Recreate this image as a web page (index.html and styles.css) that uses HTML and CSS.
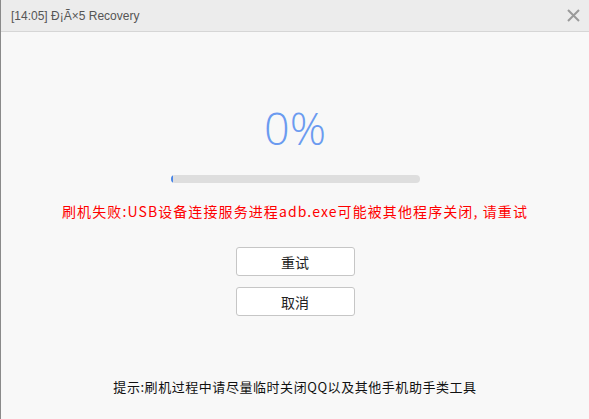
FILE: index.html
```html
<!DOCTYPE html>
<html>
<head>
<meta charset="utf-8">
<link rel="stylesheet" href="styles.css">
</head>
<body>
<div class="window">
  <div class="titlebar">
    <span class="title">[14:05] Ð¡Ã×5 Recovery</span>
    <svg class="close" width="13" height="13" viewBox="0 0 13 13"><path d="M1 1L12 12M12 1L1 12" stroke="#9a9a9a" stroke-width="2" fill="none"/></svg>
  </div>
  <div class="content">
    <div class="percent">0%</div>
    <div class="bar"><div class="fill" style="width:1%"></div></div>
    <div class="error">刷机失败:USB设备连接服务进程adb.exe可能被其他程序关闭, 请重试</div>
    <div class="buttons">
      <button class="btn">重试</button>
      <button class="btn">取消</button>
    </div>
    <div class="hint">提示:刷机过程中请尽量临时关闭QQ以及其他手机助手类工具</div>
  </div>
</div>
</body>
</html>
```
FILE: styles.css
```css
html, body { margin: 0; padding: 0; }
body {
  width: 589px; height: 419px; overflow: hidden;
  background: #f8f8f8;
  font-family: "Noto Sans", "Noto Sans CJK SC", sans-serif;
}
.window {
  height: 419px;
  box-sizing: border-box;
  border-left: 1px solid #8a8a8a;
  display: flex; flex-direction: column;
}
.titlebar {
  height: 32px; box-sizing: border-box;
  background: #ececec;
  border-bottom: 1px solid #d6d6d6;
  display: flex; align-items: center; justify-content: space-between;
  padding: 0 9px 0 10px;
}
.title { font-family: "Liberation Sans", Arial, sans-serif; font-size: 12px; color: #555; }
.close { display: block; }
.content {
  flex: 1;
  display: flex; flex-direction: column; align-items: center;
}
.percent {
  margin-top: 68px;
  font-family: "Open Sans", "Noto Sans", sans-serif;
  font-weight: 300;
  font-size: 45px; line-height: 56px;
  color: #6b9bf0;
}
.bar {
  margin-top: 19px;
  width: 249px; height: 8px;
  border-radius: 4px;
  background: #dedede;
  overflow: hidden;
}
.fill { height: 100%; background: #4a86e8; }
.error {
  margin-top: 18px;
  color: #ff0000;
  font-family: "Noto Sans CJK SC", sans-serif;
  font-size: 14px; line-height: 20px;
  letter-spacing: 1.1px;
}
.buttons {
  margin-top: 26px;
  display: flex; flex-direction: column; gap: 11px;
}
.btn {
  width: 119px; height: 29px;
  background: #fff;
  border: 1px solid #c6c6c6;
  border-radius: 3px;
  font-family: "Noto Sans CJK SC", sans-serif;
  font-size: 14px; color: #222;
  padding: 0;
}
.hint {
  margin-top: 62px;
  font-family: "Noto Sans CJK SC", sans-serif;
  font-size: 13px; line-height: 18px;
  color: #111;
  letter-spacing: 0.55px;
}
```
